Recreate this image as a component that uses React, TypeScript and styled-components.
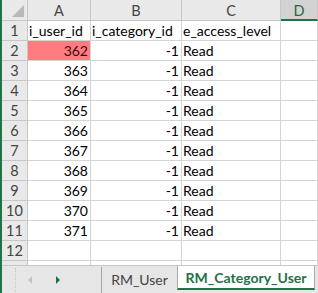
import styled, { createGlobalStyle } from "styled-components";

const GlobalStyle = createGlobalStyle`
    html, body {
        margin: 0;
        padding: 0;
        overflow: hidden;
        background: #ffffff;
    }
    * { box-sizing: border-box; }
`;

const Page = styled.div`
    width: 318px;
    height: 293px;
    display: flex;
    flex-direction: column;
    border-left: 2px solid #217346;
    font-family: Lato, "Liberation Sans", sans-serif;
    overflow: hidden;
`;

const Sheet = styled.div`
    flex: 1;
    display: grid;
    grid-template-columns: 26px 63px 91px 99px 1fr;
    grid-template-rows: 21px;
    grid-auto-rows: 20px;
    overflow: hidden;
`;

const Corner = styled.div`
    position: relative;
    background: #e9e9e9;
    border-right: 1px solid #c6c6c6;
    border-bottom: 1px solid #c6c6c6;
    &::after {
        content: "";
        position: absolute;
        right: 3px;
        bottom: 3px;
        width: 12px;
        height: 12px;
        background: #b8b8b8;
        clip-path: polygon(100% 0, 100% 100%, 0 100%);
    }
`;

const ColHead = styled.div<{ $selected?: boolean }>`
    display: flex;
    align-items: center;
    justify-content: center;
    font-size: 14.5px;
    background: ${p => (p.$selected ? "#d2d2d2" : "#e9e9e9")};
    color: ${p => (p.$selected ? "#1d6a40" : "#444444")};
    border-right: 1px solid #c6c6c6;
    border-bottom: ${p => (p.$selected ? "2px solid #217346" : "1px solid #c6c6c6")};
    padding-top: 1px;
`;

const RowHead = styled.div`
    display: flex;
    align-items: flex-end;
    justify-content: center;
    padding-bottom: 1px;
    font-size: 14.5px;
    background: #e9e9e9;
    color: #444444;
    border-right: 1px solid #c6c6c6;
    border-bottom: 1px solid #c6c6c6;
`;

const Cell = styled.div<{ $align?: "left" | "right"; $fill?: string }>`
    display: flex;
    align-items: flex-end;
    justify-content: ${p => (p.$align === "right" ? "flex-end" : "flex-start")};
    padding: 0 2px 1px 1px;
    font-size: 14px;
    color: ${p => (p.$fill ? "#3d0a0a" : "#000000")};
    background: ${p => p.$fill || "#ffffff"};
    border-right: 1px solid #d4d4d4;
    border-bottom: 1px solid #d4d4d4;
    white-space: nowrap;
`;

const TabBar = styled.div`
    height: 28px;
    flex-shrink: 0;
    display: flex;
    align-items: flex-start;
    background: #e6e6e6;
    border-top: 1px solid #c6c6c6;
    overflow: hidden;
`;

const NavArea = styled.div`
    width: 100px;
    flex-shrink: 0;
    height: 26px;
    margin-top: 1px;
    display: flex;
    align-items: center;
    border-right: 1px solid #a6a6a6;
    position: relative;
    &::before {
        content: "";
        position: absolute;
        left: 13px;
        top: 1px;
        bottom: 1px;
        border-left: 1px dotted #c4c4c4;
    }
`;

const Arrow = styled.span<{ $dir: "left" | "right"; $active?: boolean }>`
    width: 0;
    height: 0;
    border-top: 4px solid transparent;
    border-bottom: 4px solid transparent;
    ${p =>
        p.$dir === "left"
            ? `border-right: 4px solid ${p.$active ? "#217346" : "#c3c3c3"};`
            : `border-left: 4px solid ${p.$active ? "#217346" : "#c3c3c3"};`}
    margin-left: ${p => (p.$dir === "left" ? "26px" : "24px")};
`;

const Tab = styled.div<{ $active?: boolean }>`
    flex-shrink: 0;
    width: ${p => (p.$active ? "138px" : "75px")};
    height: ${p => (p.$active ? "24px" : "27px")};
    display: flex;
    align-items: center;
    justify-content: center;
    font-size: 14px;
    font-weight: ${p => (p.$active ? 700 : 400)};
    color: ${p => (p.$active ? "#217346" : "#444444")};
    background: ${p => (p.$active ? "#ffffff" : "transparent")};
    border-left: ${p => (p.$active ? "1px solid #ababab" : "none")};
    border-right: ${p => (p.$active ? "1px solid #ababab" : "none")};
    border-bottom: ${p => (p.$active ? "2px solid #217346" : "none")};
    white-space: nowrap;
`;

const rows = [
    ["i_user_id", "i_category_id", "e_access_level"],
    ...Array.from({ length: 10 }, (_, i) => [String(362 + i), "-1", "Read"]),
    ["", "", ""],
];

function App() {
    return (
        <Page>
            <GlobalStyle />
            <Sheet>
                <Corner />
                <ColHead>A</ColHead>
                <ColHead>B</ColHead>
                <ColHead>C</ColHead>
                <ColHead $selected>D</ColHead>
                {rows.map((r, i) => [
                    <RowHead key={`h${i}`}>{i + 1}</RowHead>,
                    <Cell key={`a${i}`} $align={i === 0 ? "left" : "right"} $fill={i === 1 ? "#ff7c80" : undefined}>
                        {r[0]}
                    </Cell>,
                    <Cell key={`b${i}`} $align={i === 0 ? "left" : "right"}>{r[1]}</Cell>,
                    <Cell key={`c${i}`}>{r[2]}</Cell>,
                    <Cell key={`d${i}`} />,
                ])}
                <RowHead />
                <Cell />
                <Cell />
                <Cell />
                <Cell />
            </Sheet>
            <TabBar>
                <NavArea>
                    <Arrow $dir="left" />
                    <Arrow $dir="right" $active />
                </NavArea>
                <Tab>RM_User</Tab>
                <Tab $active>RM_Category_User</Tab>
            </TabBar>
        </Page>
    );
}

export default App;
